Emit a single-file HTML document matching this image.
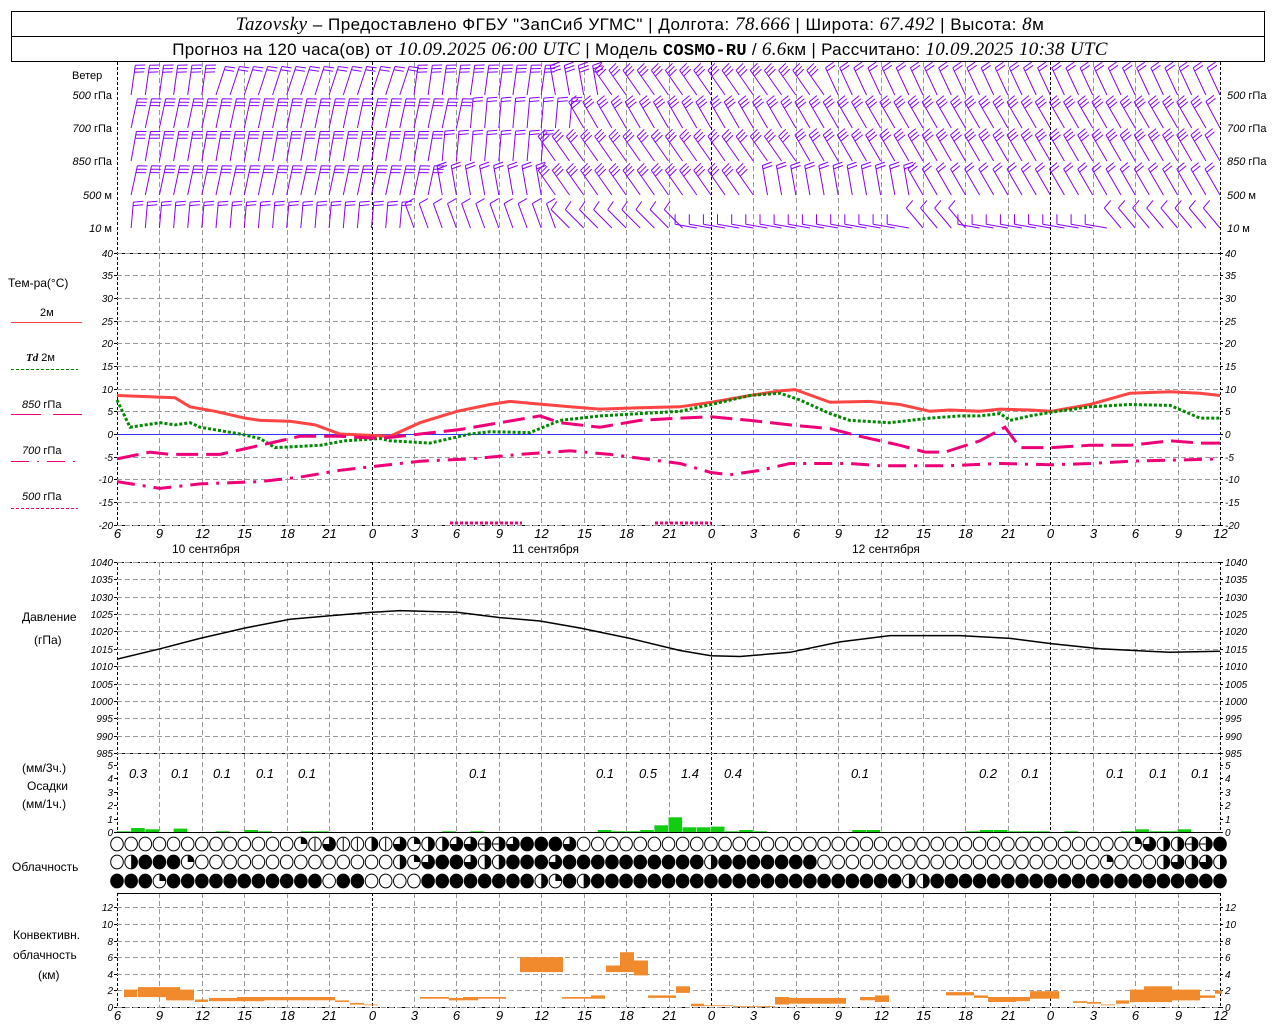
<!DOCTYPE html>
<html><head><meta charset="utf-8">
<style>
body{margin:0;background:#fff;width:1280px;height:1024px;overflow:hidden}
svg{display:block}
text{font-family:"Liberation Sans",sans-serif;fill:#000}
.tk{font-family:"Liberation Sans",sans-serif;font-style:italic;font-size:10px}
.hd{font-size:17px}
.it{font-family:"Liberation Serif",serif;font-style:italic}
</style></head><body>
<svg id="s" width="1280" height="1024" xmlns="http://www.w3.org/2000/svg">
<rect x="11.5" y="11.5" width="1253" height="50" fill="none" stroke="#000"/>
<line x1="11" y1="36.5" x2="1265" y2="36.5" stroke="#000"/>
<text x="640" y="30" text-anchor="middle" class="hd" letter-spacing="0.5"><tspan class="it" font-size="19">Tazovsky</tspan> – Предоставлено ФГБУ "ЗапСиб УГМС" | Долгота: <tspan class="it" font-size="19">78.666</tspan> | Широта: <tspan class="it" font-size="19">67.492</tspan> | Высота: <tspan class="it" font-size="19">8</tspan>м</text>
<text x="640" y="55" text-anchor="middle" class="hd" letter-spacing="0.3">Прогноз на 120 часа(ов) от <tspan class="it" font-size="19">10.09.2025 06:00 UTC</tspan> | Модель <tspan font-family="Liberation Mono" font-weight="bold">COSMO-RU</tspan> / <tspan class="it" font-size="19">6.6</tspan>км | Рассчитано: <tspan class="it" font-size="19">10.09.2025 10:38 UTC</tspan></text>
<g font-size="11">
<text x="72" y="79">Ветер</text>
<text x="112" y="99" text-anchor="end"><tspan font-style="italic">500</tspan> гПа</text>
<text x="112" y="132" text-anchor="end"><tspan font-style="italic">700</tspan> гПа</text>
<text x="112" y="165" text-anchor="end"><tspan font-style="italic">850</tspan> гПа</text>
<text x="112" y="199" text-anchor="end"><tspan font-style="italic">500</tspan> м</text>
<text x="112" y="232" text-anchor="end"><tspan font-style="italic">10</tspan>   м</text>
<text x="1227" y="99"><tspan font-style="italic">500</tspan> гПа</text>
<text x="1227" y="132"><tspan font-style="italic">700</tspan> гПа</text>
<text x="1227" y="165"><tspan font-style="italic">850</tspan> гПа</text>
<text x="1227" y="199"><tspan font-style="italic">500</tspan> м</text>
<text x="1227" y="232"><tspan font-style="italic">10</tspan>   м</text>
<text x="8" y="287" font-size="12">Тем-ра(°С)</text>
<text x="40" y="316">2м</text>
<text x="26" y="361"><tspan class="it" font-weight="bold">Td</tspan>  2м</text>
<text x="22" y="408"><tspan font-style="italic">850</tspan> гПа</text>
<text x="22" y="454"><tspan font-style="italic">700</tspan> гПа</text>
<text x="22" y="500"><tspan font-style="italic">500</tspan> гПа</text>
<text x="22" y="621" font-size="12">Давление</text>
<text x="34" y="644" font-size="12">(гПа)</text>
<text x="22" y="772" font-size="12">(мм/3ч.)</text>
<text x="27" y="790" font-size="12">Осадки</text>
<text x="22" y="808" font-size="12">(мм/1ч.)</text>
<text x="12" y="871" font-size="12">Облачность</text>
<text x="13" y="939" font-size="12">Конвективн.</text>
<text x="13" y="959" font-size="12">облачность</text>
<text x="38" y="979" font-size="12">(км)</text>
<text x="172" y="553" font-size="12">10 сентября</text>
<text x="512" y="553" font-size="12">11 сентября</text>
<text x="852" y="553" font-size="12">12 сентября</text>
</g>
<line x1="11" y1="322.5" x2="82" y2="322.5" stroke="#f44" stroke-width="1"/>
<line x1="11" y1="369.5" x2="78" y2="369.5" stroke="#080" stroke-dasharray="3,2"/>
<line x1="11" y1="414.5" x2="82" y2="414.5" stroke="#e07" stroke-dasharray="30,12"/>
<line x1="11" y1="461.5" x2="78" y2="461.5" stroke="#e07" stroke-dasharray="18,8,2,8"/>
<line x1="11" y1="508.5" x2="78" y2="508.5" stroke="#e07" stroke-dasharray="3,2"/>
<g id="g"></g>
</svg>
<script>
var NS="http://www.w3.org/2000/svg",G=document.getElementById('g');
function el(t,a,txt){var e=document.createElementNS(NS,t);for(var k in a)e.setAttribute(k,a[k]);if(txt!=null)e.textContent=txt;G.appendChild(e);return e;}
var X0=117,X1=1220,DX=(X1-X0)/78;
function xh(h){return X0+h*DX;}
for(var i=0;i<=26;i++){var x=Math.round(X0+i*(X1-X0)/26)+.5;var day=(i%8==6);
 var segs=[[62,525],[562,832],[893,1007]];
 segs.forEach(function(s){el('line',{x1:x,y1:s[0],x2:x,y2:s[1],stroke:day||i==0||i==26?'#000':'#999','stroke-dasharray':day||i==0||i==26?'3,2':'5,3','stroke-width':1});});
 var lab=[6,9,12,15,18,21,0,3][i%8];
 el('text',{x:x,y:538,'text-anchor':'middle','font-size':13,'font-style':'italic'},lab);
 el('text',{x:x,y:1020,'text-anchor':'middle','font-size':13,'font-style':'italic'},lab);
}
[253,753,832,893].forEach(function(y){el('line',{x1:X0,y1:y+.5,x2:X1,y2:y+.5,stroke:'#000'});});
el('line',{x1:X0,y1:562.5,x2:X1,y2:562.5,stroke:'#000','stroke-dasharray':'3,1'});
el('line',{x1:X0,y1:525.5,x2:X1,y2:525.5,stroke:'#000','stroke-dasharray':'3,2'});
el('line',{x1:X0,y1:1007.5,x2:X1,y2:1007.5,stroke:'#000','stroke-dasharray':'3,2'});
function ticks(v0,v1,st,yf,grid){for(var v=v0;v<=v1;v+=st){var y=Math.round(yf(v))+.5;
 if(grid)el('line',{x1:X0,y1:y,x2:X1,y2:y,stroke:'#999','stroke-dasharray':'5,3'});
 el('line',{x1:X0-3,y1:y,x2:X0,y2:y,stroke:'#000'});el('line',{x1:X1,y1:y,x2:X1+3,y2:y,stroke:'#000'});
 el('text',{x:X0-4,y:y+3.5,'text-anchor':'end',class:'tk'},v);el('text',{x:X1+5,y:y+3.5,class:'tk'},v);}}
var yT=function(t){return 434-t*4.533;};
ticks(-20,40,5,yT,true);
var yP=function(p){return 753-(p-985)*3.473;};
ticks(985,1040,5,yP,true);
var yR=function(r){return 832-r*13.4;};
ticks(0,5,1,yR,false);
var yC=function(k){return 1007-k*8.3;};
ticks(0,12,2,yC,true);
el('line',{x1:X0,y1:434.5,x2:X1,y2:434.5,stroke:'#33f','stroke-width':1});
function pl(pts,yf,attrs){var d=pts.map(function(p){return p[0]+','+yf(p[1]).toFixed(1);}).join(' ');attrs.points=d;attrs.fill='none';el('polyline',attrs);}
pl([[117,8.5],[175,8],[190,6],[215,5],[245,3.5],[260,3],[290,2.8],[315,2],[340,0],[390,-0.5],[420,2.5],[457,5],[490,6.5],[510,7.2],[530,6.8],[570,6],[600,5.5],[640,5.8],[680,6],[711,7],[750,8.5],[780,9.5],[795,9.8],[830,7],[870,7.2],[900,6.5],[930,5],[950,5.3],[980,5],[1000,5.5],[1030,5.3],[1051,5],[1090,6.5],[1130,9],[1170,9.3],[1200,9],[1220,8.5]],yT,{stroke:'#f44','stroke-width':3});
pl([[117,7.5],[130,1.5],[160,2.5],[175,2],[190,2.5],[200,1.5],[240,0],[260,-1],[275,-3],[320,-2.5],[345,-1.5],[380,-1],[390,-1.5],[430,-2],[470,0],[490,0.5],[530,0.3],[560,3],[600,4],[640,4.5],[680,5],[711,6.5],[750,8.5],[780,9],[800,7.5],[830,4.5],[850,3],[890,2.5],[930,3.5],[960,4],[980,4],[1000,4.5],[1010,3],[1030,4],[1051,4.8],[1090,6],[1130,6.5],[1170,6.3],[1200,3.5],[1220,3.5]],yT,{stroke:'#080','stroke-width':3,'stroke-dasharray':'3,2'});
pl([[117,-5.5],[150,-4],[170,-4.5],[220,-4.5],[250,-3],[270,-2],[300,-0.5],[340,-0.5],[380,-1],[420,0],[460,1],[500,2.5],[540,4],[560,2.5],[600,1.5],[640,3],[680,3.5],[711,3.8],[750,3],[790,2],[830,1.2],[860,-0.5],[900,-2.5],[925,-4],[945,-4],[980,-1.5],[1005,1.5],[1020,-3],[1051,-3],[1090,-2.5],[1130,-2.5],[1170,-1.5],[1200,-2],[1220,-2]],yT,{stroke:'#e07','stroke-width':3,'stroke-dasharray':'22,8'});
pl([[117,-10.5],[160,-12],[200,-11],[260,-10.5],[300,-9.5],[340,-8],[380,-7],[420,-6],[470,-5.5],[520,-4.5],[570,-3.7],[610,-4.5],[680,-6.5],[711,-8.5],[730,-9],[760,-8],[790,-6.5],[850,-6.5],[880,-7],[950,-7],[1000,-6.5],[1051,-6.8],[1090,-6.5],[1130,-6],[1220,-5.5]],yT,{stroke:'#e07','stroke-width':3,'stroke-dasharray':'18,8,3,8'});
el('line',{x1:450,y1:523,x2:522,y2:523,stroke:'#e07','stroke-width':3,'stroke-dasharray':'3,2'});
el('line',{x1:655,y1:523,x2:711,y2:523,stroke:'#e07','stroke-width':3,'stroke-dasharray':'3,2'});
pl([[117,1012],[160,1015],[200,1018],[245,1021],[290,1023.5],[330,1024.5],[372,1025.5],[400,1026],[457,1025.5],[500,1024],[540,1023],[580,1021],[630,1018],[680,1014.5],[711,1013],[740,1012.8],[790,1014],[840,1017],[890,1018.8],[960,1018.8],[1010,1018],[1051,1016.5],[1100,1015],[1170,1014],[1220,1014.3]],yP,{stroke:'#000','stroke-width':1.5});
var pr={0:.05,1:.3,2:.2,4:.25,7:.05,9:.15,10:.05,13:.05,14:.05,23:.05,25:.05,34:.15,35:.05,36:.05,37:.15,38:.5,39:1.1,40:.35,41:.35,42:.4,43:.05,44:.15,45:.05,52:.15,53:.15,60:.05,61:.15,62:.15,63:.05,64:.05,65:.05,67:.05,71:.05,72:.2,73:.05,74:.05,75:.2};
for(var h in pr){var x=xh(+h);el('rect',{x:x.toFixed(1),y:yR(pr[h]).toFixed(1),width:DX-0.5,height:(pr[h]*13.4).toFixed(1),fill:'#1c1'});}
[[138,'0.3'],[180,'0.1'],[222,'0.1'],[265,'0.1'],[307,'0.1'],[478,'0.1'],[605,'0.1'],[648,'0.5'],[690,'1.4'],[733,'0.4'],[860,'0.1'],[988,'0.2'],[1030,'0.1'],[1115,'0.1'],[1158,'0.1'],[1200,'0.1']].forEach(function(a){el('text',{x:a[0],y:778,'text-anchor':'middle','font-size':13,'font-style':'italic'},a[1]);});
[[124,137,1.2,2.1],[138,180,1.2,2.4],[166,194,.8,2.1],[195,208,.6,.9],[209,237,.7,1.1],[237,264,.7,1.2],[264,335,.8,1.2],[335,349,.6,.8],[350,364,.3,.5],[364,378,.2,.3],[420,449,1,1.2],[449,463,.8,1.1],[463,478,.8,1.2],[478,506,1,1.2],[520,563,4.2,6],[562,591,1,1.2],[591,605,1,1.4],[606,620,4.2,5],[620,634,4.2,6.6],[634,648,3.8,5.6],[648,676,1.1,1.4],[676,690,1.7,2.5],[691,704,.1,.4],[704,733,.1,.2],[733,775,0,.1],[775,789,.3,1.2],[789,846,.4,1.1],[860,875,.8,1.2],[875,889,.6,1.4],[946,974,1.4,1.8],[974,988,1.1,1.4],[988,1016,.6,1.2],[1016,1030,.7,1.2],[1030,1059,1,1.9],[1073,1087,.5,.7],[1087,1101,.4,.6],[1101,1115,.2,.3],[1116,1129,.4,.8],[1130,1144,.6,2.1],[1144,1172,.6,2.5],[1172,1200,.8,2.1],[1200,1215,1.1,1.4],[1215,1222,1.6,2]].forEach(function(b){el('rect',{x:b[0],y:yC(b[3]).toFixed(1),width:b[1]-b[0],height:((b[3]-b[2])*8.3).toFixed(1),fill:'#f08a2c'});});
var rows=[
"0000000000000q1t11h1tqhhttHHt444t000000000000000000000000000000000000000qthhHH44h",
"0h444q00000000000000hqt44thh444t4444444444h444444400000000000000000000q000hthth444",
"444q44444444444044000044444444hq4h4444444444444444444444hh444444444444444444444444"];
var cy=[844,862,881];
rows.forEach(function(r,ri){for(var i=0;i<79;i++){var c=r[i]||'4';var x=xh(i),y=cy[ri],R=6.3;
 el('ellipse',{cx:x,cy:y,rx:R,ry:R+0.6,fill:c=='4'?'#000':'#fff',stroke:'#000','stroke-width':1});
 if(c=='h'){el('path',{d:'M'+x+','+(y-R-.6)+' A'+R+','+(R+.6)+' 0 0 1 '+x+','+(y+R+.6)+' Z',fill:'#000'});}
 if(c=='H'){el('path',{d:'M'+x+','+(y-R-.6)+' A'+R+','+(R+.6)+' 0 0 1 '+x+','+(y+R+.6)+' Z',fill:'#000'});el('line',{x1:x-R,y1:y,x2:x,y2:y,stroke:'#000'});}
 if(c=='q'){el('path',{d:'M'+x+','+y+' L'+x+','+(y-R-.6)+' A'+R+','+(R+.6)+' 0 0 1 '+(x+R)+','+y+' Z',fill:'#000'});}
 if(c=='1'){el('line',{x1:x,y1:y-R,x2:x,y2:y+R,stroke:'#000'});}
 if(c=='t'){el('path',{d:'M'+x+','+y+' L'+x+','+(y-R-.6)+' A'+R+','+(R+.6)+' 0 1 1 '+(x-R)+','+y+' Z',fill:'#000'});}
}});
var wr=[
 {y:95,k:[[0,8,3],[7,18,2],[21,8,3],[31,-10,3],[35,-35,3],[51,-25,2],[78,-25,2]]},
 {y:128,k:[[0,12,3],[25,5,2],[33,-30,3],[41,-30,3],[78,-28,2]]},
 {y:161,k:[[0,10,3],[23,5,2],[31,-35,3],[49,-30,3],[78,-30,2]]},
 {y:195,k:[[0,12,3],[23,-10,2],[31,-35,3],[46,-10,2],[57,-30,2],[78,-30,2]]},
 {y:228,k:[[0,5,2],[21,-20,1],[32,-45,1],[41,-80,1],[57,-40,1],[61,-80,1],[71,-40,1],[78,-40,1]],L:26}];
wr.forEach(function(w){var L=w.L||30;for(var h=1;h<=78;h++){var a=0,n=1;
 for(var j=w.k.length-1;j>=0;j--){if(h>=w.k[j][0]){a=w.k[j][1];n=w.k[j][2];break;}}
 if(w.y==228&&a==-80)L=22;else L=w.L||30;
 var x=xh(h),y=w.y,r=a*Math.PI/180,dx=Math.sin(r),dy=-Math.cos(r),tx=x+dx*L,ty=y+dy*L;
 var d='M'+x.toFixed(1)+','+y+' L'+tx.toFixed(1)+','+ty.toFixed(1);
 var fr=r+80*Math.PI/180,fx=Math.sin(fr),fy=-Math.cos(fr);
 for(var f=0;f<n;f++){var bx=tx-dx*f*3.5,by=ty-dy*f*3.5;d+=' M'+bx.toFixed(1)+','+by.toFixed(1)+' l'+(fx*10).toFixed(1)+','+(fy*10).toFixed(1);}
 el('path',{d:d,stroke:'#80f',fill:'none','stroke-width':1});}});
</script>
</body></html>
